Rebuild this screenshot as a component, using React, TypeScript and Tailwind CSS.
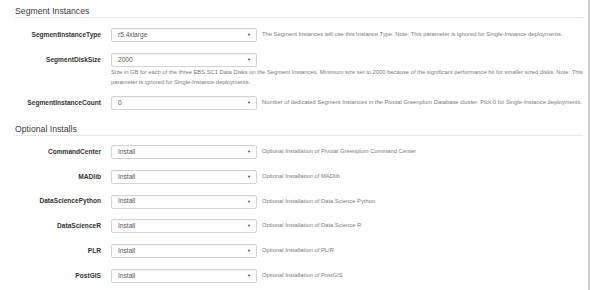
const font = { fontFamily: '"Liberation Sans", Arial, sans-serif' };

type Field = { label: string; value: string; help: string };

const optional: Field[] = [
  { label: "CommandCenter", value: "Install", help: "Optional Installation of Pivotal Greenplum Command Center" },
  { label: "MADlib", value: "Install", help: "Optional Installation of MADlib" },
  { label: "DataSciencePython", value: "Install", help: "Optional Installation of Data Science Python" },
  { label: "DataScienceR", value: "Install", help: "Optional Installation of Data Science R" },
  { label: "PLR", value: "Install", help: "Optional Installation of PL/R" },
  { label: "PostGIS", value: "Install", help: "Optional Installation of PostGIS" },
];

function Select({ value }: { value: string }) {
  return (
    <div className="w-[146px] h-[14px] shrink-0 border border-[#d4d4d4] rounded-[2px] bg-white flex items-center justify-between pl-[6px] pr-[5px] shadow-[inset_0_1px_1px_rgba(0,0,0,0.04)]">
      <span className="text-[6.6px] text-[#555] leading-none">{value}</span>
      <span className="text-[4px] text-[#444] leading-none">▼</span>
    </div>
  );
}

function Label({ text }: { text: string }) {
  return (
    <div className="w-[86px] shrink-0 text-right font-bold text-[6.6px] text-[#333] leading-none">
      {text}
    </div>
  );
}

function Row({ field }: { field: Field }) {
  return (
    <div className="flex items-center gap-[10px] h-[14px]">
      <Label text={field.label} />
      <Select value={field.value} />
      <div className="ml-[-5px] text-[5.8px] text-[#7a7a7a] leading-none whitespace-nowrap">{field.help}</div>
    </div>
  );
}

function Heading({ text }: { text: string }) {
  return (
    <div className="border-b border-[#e8e8e8] mr-[5px] h-[12px] text-[8.7px] text-[#3a3a3a] leading-[10px]">
      {text}
    </div>
  );
}

export default function App() {
  return (
    <div style={font} className="w-[590px] h-[290px] bg-white border-r-2 border-[#cfcfcf] pl-[15px] pt-[6px] overflow-hidden">
      <Heading text="Segment Instances" />

      <div className="mt-[10px] flex flex-col">
        <Row
          field={{
            label: "SegmentInstanceType",
            value: "r5.4xlarge",
            help: "The Segment Instances will use this Instance Type. Note: This parameter is ignored for Single-Instance deployments.",
          }}
        />

        <div className="mt-[11px] flex gap-[10px]">
          <div className="h-[14px] flex items-center">
            <Label text="SegmentDiskSize" />
          </div>
          <div className="flex flex-col">
            <Select value="2000" />
            <p className="mr-[5px] text-[5.8px] leading-[10px] text-[#7a7a7a]">
              Size in GB for each of the three EBS SC1 Data Disks on the Segment Instances. Minimum size set to 2000 because of the significant performance hit for smaller sized disks. Note: This parameter is ignored for Single-Instance deployments.
            </p>
          </div>
        </div>

        <div className="mt-[9px]">
          <Row
            field={{
              label: "SegmentInstanceCount",
              value: "0",
              help: "Number of dedicated Segment Instances in the Pivotal Greenplum Database cluster. Pick 0 for Single-Instance deployments.",
            }}
          />
        </div>
      </div>

      <div className="mt-[14px]">
        <Heading text="Optional Installs" />
      </div>

      <div className="mt-[9px] flex flex-col gap-[10.8px]">
        {optional.map((f) => (
          <Row key={f.label} field={f} />
        ))}
      </div>
    </div>
  );
}
